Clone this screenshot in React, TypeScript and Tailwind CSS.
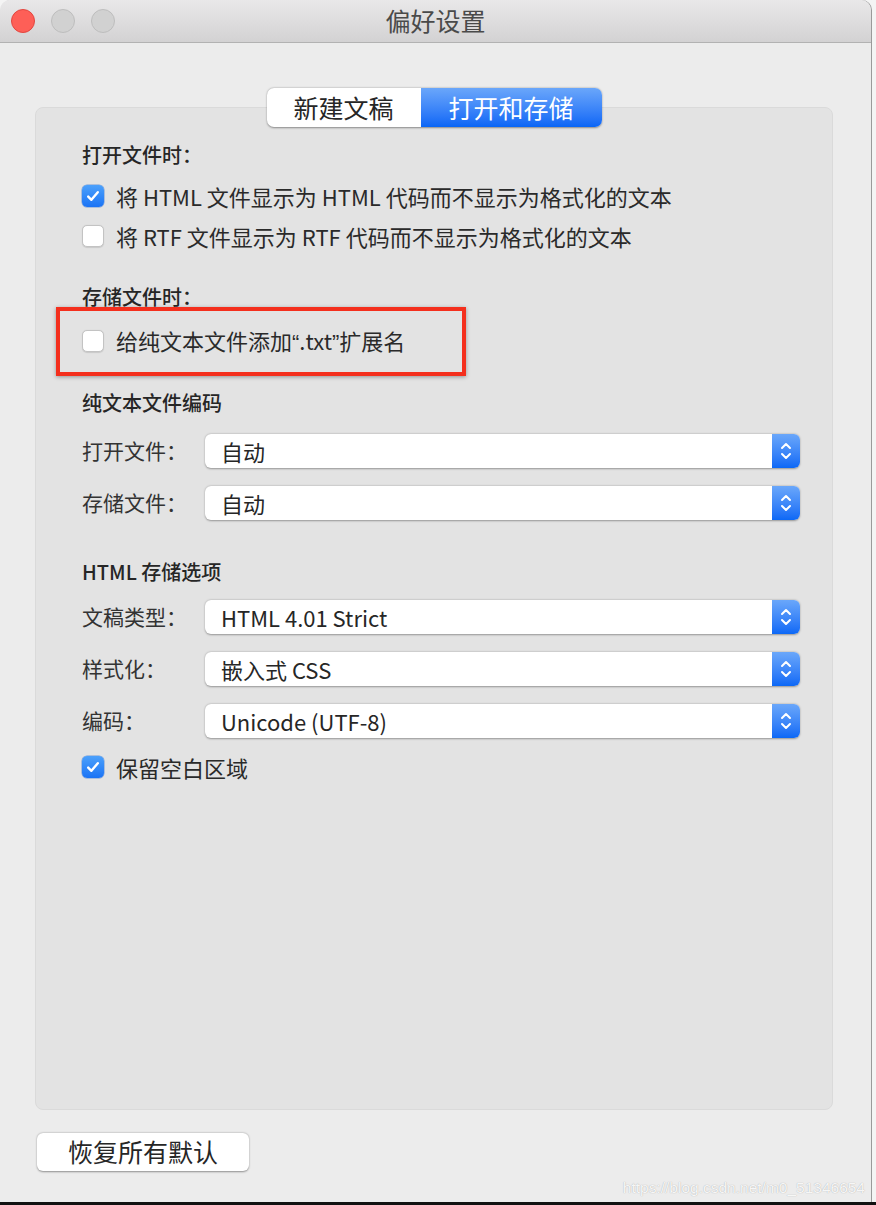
import React from "react";

const font = "font-['Noto_Sans_CJK_SC','Noto_Sans',sans-serif]";

function CheckBox({ checked }: { checked?: boolean }) {
  if (checked) {
    return (
      <div className="flex h-[22px] w-[22px] shrink-0 items-center justify-center rounded-[5px] bg-gradient-to-b from-[#4ba0fb] to-[#1a73f5] shadow-[0_0_0_0.5px_rgba(0,80,200,0.5)]">
        <svg width="16" height="16" viewBox="0 0 16 16" fill="none">
          <path d="M3.2 8.6 L6.4 11.8 L12.8 4.2" stroke="white" strokeWidth="2.4" strokeLinecap="round" strokeLinejoin="round" />
        </svg>
      </div>
    );
  }
  return (
    <div className="h-[22px] w-[22px] shrink-0 rounded-[5px] border border-[#c3c3c3] bg-white shadow-[0_0.5px_1px_rgba(0,0,0,0.12)]" />
  );
}

function CheckRow({ checked, label, className = "" }: { checked?: boolean; label: React.ReactNode; className?: string }) {
  return (
    <div className={`flex h-[40px] items-center gap-[12px] ${className}`}>
      <CheckBox checked={checked} />
      <span className="whitespace-nowrap text-[22px] text-[#2a2a2a]">{label}</span>
    </div>
  );
}

function Heading({ children, className = "" }: { children: React.ReactNode; className?: string }) {
  return (
    <div className={`flex h-[30px] items-center text-[20px] font-medium text-[#262626] ${className}`}>{children}</div>
  );
}

function Popup({ label, value, className = "" }: { label: string; value: string; className?: string }) {
  return (
    <div className={`flex h-[34px] items-center ${className}`}>
      <div className="w-[123px] shrink-0 text-[21px] text-[#333333]">{label}</div>
      <div className="flex h-[34px] flex-1 items-stretch overflow-hidden rounded-[6px] bg-white shadow-[0_0.5px_2px_rgba(0,0,0,0.35)]">
        <div className="flex flex-1 items-center pl-[16px] text-[22px] text-[#262626]">{value}</div>
        <div className="flex w-[28px] items-center justify-center bg-gradient-to-b from-[#6aa7fa] to-[#0a68f6]">
          <svg width="14" height="22" viewBox="0 0 14 22" fill="none">
            <path d="M3 8 L7 4 L11 8" stroke="white" strokeWidth="2" strokeLinecap="round" strokeLinejoin="round" />
            <path d="M3 14 L7 18 L11 14" stroke="white" strokeWidth="2" strokeLinecap="round" strokeLinejoin="round" />
          </svg>
        </div>
      </div>
    </div>
  );
}

export default function App() {
  return (
    <div className={`relative h-[1205px] w-[876px] overflow-hidden bg-[#f4f4f4] ${font}`}>
      <div className="flex h-[1202px] w-[871px] flex-col overflow-hidden rounded-t-[10px] bg-[#ececec] shadow-[1px_0_0_#9a9a9a]">
        {/* title bar */}
        <div className="grid h-[43px] shrink-0 grid-cols-[1fr_auto_1fr] items-center border-b border-[#b2b2b2] bg-gradient-to-b from-[#e9e8e9] to-[#d3d2d3] px-[11px]">
          <div className="flex items-center gap-[16px]">
            <div className="h-[24px] w-[24px] rounded-full border border-[#e2463f] bg-[#fe5f57]" />
            <div className="h-[24px] w-[24px] rounded-full border border-[#bdbdbd] bg-[#d1d1d1]" />
            <div className="h-[24px] w-[24px] rounded-full border border-[#bdbdbd] bg-[#d1d1d1]" />
          </div>
          <div className="text-[25px] text-[#4a4a4a]">偏好设置</div>
          <div />
        </div>

        <div className="flex flex-1 flex-col pl-[35px] pr-[38px] pt-[45px]">
          {/* segmented control */}
          <div className="relative z-10 flex justify-center">
            <div className="flex h-[39px] overflow-hidden rounded-[7px] bg-white shadow-[0_0.5px_2px_rgba(0,0,0,0.4)]">
              <div className="flex w-[154px] items-center justify-center text-[25px] text-[#262626]">新建文稿</div>
              <div className="flex w-[181px] items-center justify-center bg-gradient-to-b from-[#6aa6fa] to-[#0765f6] text-[25px] text-white">
                打开和存储
              </div>
            </div>
          </div>

          {/* group box */}
          <div className="-mt-[20px] flex h-[1003px] flex-col rounded-[8px] border border-[#dadada] bg-[#e3e3e3] pl-[46px] pr-[32px] pt-[32px]">
            <Heading>打开文件时：</Heading>
            <CheckRow checked label="将 HTML 文件显示为 HTML 代码而不显示为格式化的文本" className="mt-[6px]" />
            <CheckRow label="将 RTF 文件显示为 RTF 代码而不显示为格式化的文本" />

            <Heading className="mt-[26px]">存储文件时：</Heading>
            <div className="relative mt-[9px]">
              <CheckRow
                label={
                  <>
                    给纯文本文件添加<span className="font-['Liberation_Sans',sans-serif]">“</span>.txt
                    <span className="font-['Liberation_Sans',sans-serif]">”</span>扩展名
                  </>
                }
              />
              <div className="absolute left-[-26px] top-[-14px] h-[69px] w-[410px] border-[4px] border-[#f42f1d] shadow-[0_1px_4px_rgba(0,0,0,0.35)]" />
            </div>

            <Heading className="mt-[27px]">纯文本文件编码</Heading>
            <Popup label="打开文件：" value="自动" className="mt-[16px]" />
            <Popup label="存储文件：" value="自动" className="mt-[18px]" />

            <Heading className="mt-[37px]">HTML 存储选项</Heading>
            <Popup label="文稿类型：" value="HTML 4.01 Strict" className="mt-[13px]" />
            <Popup label="样式化：" value="嵌入式 CSS" className="mt-[18px]" />
            <Popup label="编码：" value="Unicode (UTF-8)" className="mt-[18px]" />
            <CheckRow checked label="保留空白区域" className="mt-[9px]" />
          </div>

          <div className="mt-[23px] flex">
            <button className="ml-[2px] flex h-[38px] w-[212px] items-center justify-center rounded-[6px] bg-white text-[25px] text-[#262626] shadow-[0_0.5px_2px_rgba(0,0,0,0.4)]">
              恢复所有默认
            </button>
          </div>
        </div>
      </div>
      <div className="h-[3px] w-full bg-[#111111]" />

      {/* watermark */}
      <div className="absolute right-[11px] top-[1176px] whitespace-nowrap font-['Liberation_Sans',Arial,sans-serif] text-[15.5px] text-white/90 [text-shadow:0_0_1px_rgba(0,0,0,0.35)]">
        https://blog.csdn.net/m0_51346654
      </div>
    </div>
  );
}
